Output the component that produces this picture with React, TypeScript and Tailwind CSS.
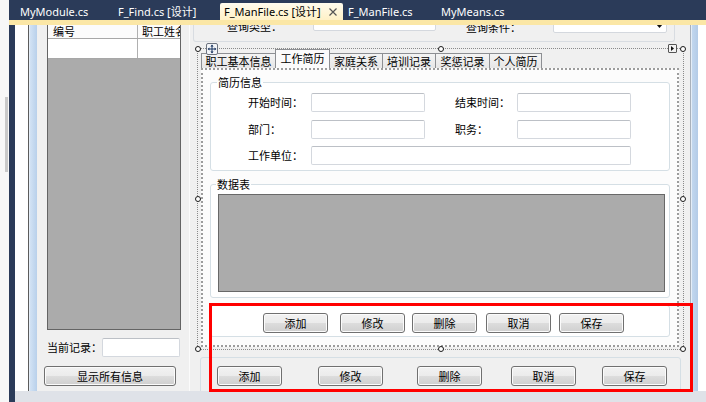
import React from "react";

const BTN =
  "h-[20px] w-[65px] shrink-0 rounded-[3px] border border-[#707070] bg-[linear-gradient(#f2f2f2_0%,#ebebeb_50%,#dddddd_50%,#cfcfcf_100%)] shadow-[inset_0_0_0_1px_#fbfbfb] text-[11px] leading-[18px] text-black text-center";
const TB = "h-[19px] shrink-0 bg-white border border-[#d4d8de] border-t-[#bcc0c6] rounded-[2px]";

function Btn({ label, className = "" }: { label: string; className?: string }) {
  return <div className={`${BTN} ${className}`}>{label}</div>;
}

function Handle({ className }: { className: string }) {
  return <div className={`absolute w-[6px] h-[6px] rounded-full border border-[#1a1a1a] bg-white ${className}`} />;
}

function Tab({ label, w, selected = false, first = false }: { label: string; w: string; selected?: boolean; first?: boolean }) {
  return (
    <div
      className={`${w} ${first ? "" : "-ml-px"} border border-b-0 border-[#8d8f93] text-center ${
        selected
          ? "relative z-10 h-[19px] bg-[#fbfbfb] leading-[16px]"
          : "h-[15px] bg-[linear-gradient(#f4f4f4,#e6e6e6)] leading-[14px]"
      }`}
    >
      {label}
    </div>
  );
}

export default function App() {
  return (
    <div className="relative w-[706px] h-[402px] flex overflow-hidden bg-white text-[11px] text-black font-['Noto_Sans_CJK_SC','Noto_Sans',sans-serif]">
      {/* far left strip */}
      <div className="w-[9px] h-full bg-[#f7f7f7] flex flex-col">
        <div className="h-[97px]" />
        <div className="ml-[5px] w-[3px] h-[75px] bg-[#c9c9c9]" />
      </div>

      <div className="flex-1 flex flex-col bg-[#2b3b59] min-w-0">
        {/* document tab bar */}
        <div className="h-[20px] flex items-end text-[11px] font-['Noto_Sans','Noto_Sans_CJK_SC',sans-serif] whitespace-nowrap">
          <div className="w-[11px] shrink-0" />
          <div className="w-[98px] shrink-0 h-[17px] leading-[17px] text-white">MyModule.cs</div>
          <div className="w-[102px] shrink-0 h-[17px] leading-[17px] text-white">F_Find.cs [设计]</div>
          <div className="w-[123px] shrink-0 h-[17px] leading-[17px] flex items-center justify-between pl-[4px] pr-[6px] rounded-t-[2px] bg-[linear-gradient(#fffbee,#fff1c6)] text-black">
            <span>F_ManFile.cs [设计]</span>
            <svg width="8" height="8" viewBox="0 0 8 8">
              <path d="M0.5 0.5L7.5 7.5M7.5 0.5L0.5 7.5" stroke="#555" strokeWidth="1.2" />
            </svg>
          </div>
          <div className="w-[5px] shrink-0" />
          <div className="w-[93px] shrink-0 h-[17px] leading-[17px] text-white">F_ManFile.cs</div>
          <div className="shrink-0 h-[17px] leading-[17px] text-white">MyMeans.cs</div>
        </div>
        <div className="h-[5px] bg-[#fbe7a6]" />

        <div className="flex-1 flex min-h-0">
          <div className="w-[6px] shrink-0" />
          <div className="flex-1 flex flex-col bg-white min-w-0">
            <div className="flex-1 flex min-h-0">
              <div className="w-[13px] shrink-0 bg-white" />
              <div className="w-px shrink-0 bg-[#5c5c5c]" />
              <div className="w-px shrink-0 bg-[#e4edf7]" />
              <div className="w-[7px] shrink-0 bg-[linear-gradient(90deg,#d2e2f4,#b8d0eb)]" />

              {/* form client area */}
              <div className="w-[653px] shrink-0 bg-[#f0f0f0] flex overflow-hidden">
                {/* left panel */}
                <div className="w-[152px] shrink-0 flex flex-col">
                  <div className="ml-[10px] w-[134px] h-[305px] flex flex-col border-x border-b border-[#646464] bg-[#ababab]">
                    <div className="h-[14px] flex border-b border-[#a7a7a7] bg-[#fbfbfb] leading-[12px]">
                      <div className="w-[90px] pl-[5px] border-r border-[#b0b0b0]">编号</div>
                      <div className="flex-1 pl-[4px] overflow-hidden whitespace-nowrap">职工姓名</div>
                    </div>
                    <div className="h-[20px] flex border-b border-[#a7a7a7] bg-white">
                      <div className="w-[90px] border-r border-[#b0b0b0]" />
                      <div className="flex-1" />
                    </div>
                  </div>
                  <div className="mt-[8px] ml-[10px] flex items-center h-[19px]">
                    <span className="w-[55px]">当前记录：</span>
                    <div className={`${TB} w-[78px]`} />
                  </div>
                  <div className={`${BTN} !w-[132px] mt-[9px] ml-[7px]`}>显示所有信息</div>
                </div>

                {/* right panel */}
                <div className="w-[501px] shrink-0 flex flex-col border-l border-[#fbfbfb]">
                  {/* query groupbox (scrolled, top clipped) */}
                  <div className="ml-[3px] w-[482px] h-[17px] shrink-0 overflow-hidden border-x border-b border-[#d8dce1] rounded-b-[3px]">
                    <div className="-mt-[14px] flex items-start">
                      <span className="ml-[33px] mt-[9px] w-[86px] leading-[12px]">查询类型：</span>
                      <div className="w-[123px] h-[20px] bg-white border border-[#d4d8de] rounded-[2px]" />
                      <span className="ml-[30px] mt-[10px] w-[87px] leading-[12px]">查询条件：</span>
                      <div className="w-[114px] h-[22px] bg-white border border-[#d4d8de] rounded-[2px] flex items-end justify-end pr-[3px] pb-[4px]">
                        <svg width="7" height="4" viewBox="0 0 7 4">
                          <path d="M0 0H7L3.5 4Z" fill="#111" />
                        </svg>
                      </div>
                    </div>
                  </div>

                  {/* tab control with designer selection */}
                  <div className="relative mt-[6px] ml-[7px] w-[487px] h-[302px] shrink-0 border border-dotted border-[#8a8a8a] flex flex-col">
                    <div className="flex items-end pl-[3px] h-[19px] shrink-0">
                      <Tab label="职工基本信息" w="w-[75px]" first />
                      <Tab label="工作简历" w="w-[55px]" selected />
                      <Tab label="家庭关系" w="w-[54px]" />
                      <Tab label="培训记录" w="w-[54px]" />
                      <Tab label="奖惩记录" w="w-[55px]" />
                      <Tab label="个人简历" w="w-[53px]" />
                    </div>
                    <div className="relative z-20 flex-1 ml-[3px] mr-[4px] mb-[2px] border-2 border-dotted border-[#9c9c9c] bg-[#fcfcfc] flex flex-col">
                      <fieldset className="mt-[5px] mx-[7px] border border-[#d5dfe5] rounded-[3px] bg-white pb-[5px]">
                        <legend className="ml-[6px] px-px leading-[14px]">简历信息</legend>
                        <div className="pt-[4px] pl-[37px] flex flex-col">
                          <div className="flex items-center h-[19px]">
                            <span className="w-[63px]">开始时间：</span>
                            <div className={`${TB} w-[114px]`} />
                            <span className="ml-[30px] w-[62px]">结束时间：</span>
                            <div className={`${TB} w-[114px]`} />
                          </div>
                          <div className="mt-[8px] flex items-center h-[19px]">
                            <span className="w-[63px]">部门：</span>
                            <div className={`${TB} w-[114px]`} />
                            <span className="ml-[30px] w-[62px]">职务：</span>
                            <div className={`${TB} w-[114px]`} />
                          </div>
                          <div className="mt-[7px] flex items-center h-[19px]">
                            <span className="w-[63px]">工作单位：</span>
                            <div className={`${TB} w-[320px]`} />
                          </div>
                        </div>
                      </fieldset>

                      <fieldset className="mt-[6px] mx-[7px] border border-[#d5dfe5] rounded-[3px] bg-white pb-[5px]">
                        <legend className="ml-[5px] px-px leading-[14px]">数据表</legend>
                        <div className="mt-[3px] ml-[7px] mr-[4px] h-[98px] bg-[#ababab] border border-[#686868]" />
                      </fieldset>

                      <div className="mt-[7px] mx-[7px] border border-[#d5dfe5] rounded-[3px] bg-white pt-[7px] pb-[3px] flex">
                        <Btn label="添加" className="ml-[52px]" />
                        <Btn label="修改" className="ml-[12px]" />
                        <Btn label="删除" className="ml-[7px]" />
                        <Btn label="取消" className="ml-[9px]" />
                        <Btn label="保存" className="ml-[8px]" />
                      </div>
                    </div>

                    {/* move glyph */}
                    <div className="absolute z-30 left-[8px] -top-[6px]">
                      <svg width="12" height="12" viewBox="0 0 12 12">
                        <rect x="0.5" y="0.5" width="11" height="11" rx="1.5" fill="#f3f5f8" stroke="#6d7480" />
                        <path d="M6 2.5v7M2.5 6h7" stroke="#17325e" strokeWidth="1" />
                        <path d="M6 1.6L4.4 3.4H7.6Z M6 10.4L4.4 8.6H7.6Z M1.6 6L3.4 4.4V7.6Z M10.4 6L8.6 4.4V7.6Z" fill="#17325e" />
                      </svg>
                    </div>
                    {/* smart tag */}
                    <div className="absolute z-30 left-[470px] -top-[5px] w-[9px] h-[9px] border border-[#555] bg-[#f2f2f2] rounded-[1px] flex items-center justify-center">
                      <svg width="5" height="5" viewBox="0 0 5 5">
                        <path d="M1 0L4 2.5L1 5Z" fill="#111" />
                      </svg>
                    </div>
                    <Handle className="z-30 -left-[3px] -top-[3px]" />
                    <Handle className="z-30 left-[calc(50%-3px)] -top-[3px]" />
                    <Handle className="z-30 -right-[3px] -top-[3px]" />
                    <Handle className="z-30 -left-[3px] top-[calc(50%-3px)]" />
                    <Handle className="z-30 -right-[3px] top-[calc(50%-3px)]" />
                    <Handle className="z-30 -left-[3px] -bottom-[3px]" />
                    <Handle className="z-30 left-[calc(50%-3px)] -bottom-[3px]" />
                    <Handle className="z-30 -right-[3px] -bottom-[3px]" />
                  </div>

                  {/* lower button groupbox */}
                  <div className="mt-[7px] ml-[10px] w-[481px] h-[40px] shrink-0 border border-[#d5dfe5] rounded-[3px] pt-[8px] flex items-start">
                    <Btn label="添加" className="ml-[16px]" />
                    <Btn label="修改" className="ml-[36px]" />
                    <Btn label="删除" className="ml-[34px]" />
                    <Btn label="取消" className="ml-[29px]" />
                    <Btn label="保存" className="ml-[26px]" />
                  </div>
                </div>
              </div>

              <div className="w-px shrink-0 bg-[#a9b1bb]" />
              <div className="w-px shrink-0 bg-[#e4edf7]" />
              <div className="w-[6px] shrink-0 bg-[linear-gradient(90deg,#c2d7ee,#b3cbe7)]" />
              <div className="w-[8px] shrink-0 bg-white" />
            </div>
            <div className="h-[11px] shrink-0 bg-[#dfe2e8]" />
          </div>
        </div>
      </div>

      {/* red annotation rectangle */}
      <div className="absolute z-50 left-[209px] top-[303px] w-[484px] h-[89px] border-[3px] border-[#ff0000] pointer-events-none" />
    </div>
  );
}
